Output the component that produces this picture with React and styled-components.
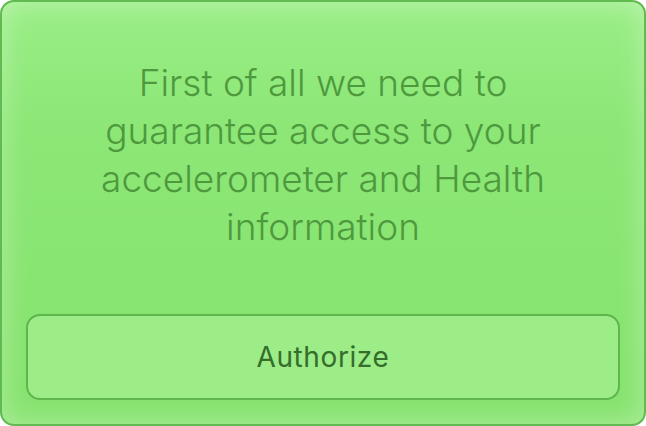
import React from "react";
import styled, {createGlobalStyle} from "styled-components";

const Global = createGlobalStyle`
    html, body {
        margin: 0;
        padding: 0;
        background: #ffffff;
    }
    body {
        font-family: Inter, "Liberation Sans", sans-serif;
    }
`

const App = () => {
    return (
        <>
            <Global/>
            <Card>
                <Message>
                    First of all we need to guarantee access to your accelerometer and Health information
                </Message>
                <Button type="button">Authorize</Button>
            </Card>
        </>
    );
};

const Card = styled.div`
    box-sizing: border-box;
    width: 646px;
    height: 426px;
    border: 2px solid #62bb50;
    border-radius: 14px;
    background: linear-gradient(180deg, #9aee86 0%, #8ce776 30%, #86e36e 100%);
    box-shadow: inset 0 0 28px rgba(255, 255, 255, 0.35);
    display: flex;
    flex-direction: column;
    align-items: stretch;
    padding: 57px 24px 24px;
`

const Message = styled.p`
    margin: 0 auto;
    width: 500px;
    text-align: center;
    font-family: Inter, "Roboto", sans-serif;
    font-weight: 300;
    font-size: 37px;
    line-height: 48px;
    color: #4e993e;
    flex: 1;
`

const Button = styled.button`
    box-sizing: border-box;
    height: 86px;
    width: 100%;
    border: 2px solid #5eb64c;
    border-radius: 14px;
    background: #9cec88;
    font-family: Inter, "Roboto", sans-serif;
    font-weight: 400;
    font-size: 28px;
    letter-spacing: 0.6px;
    color: #356d2b;
    padding: 0;
    cursor: pointer;
`

export default App;
